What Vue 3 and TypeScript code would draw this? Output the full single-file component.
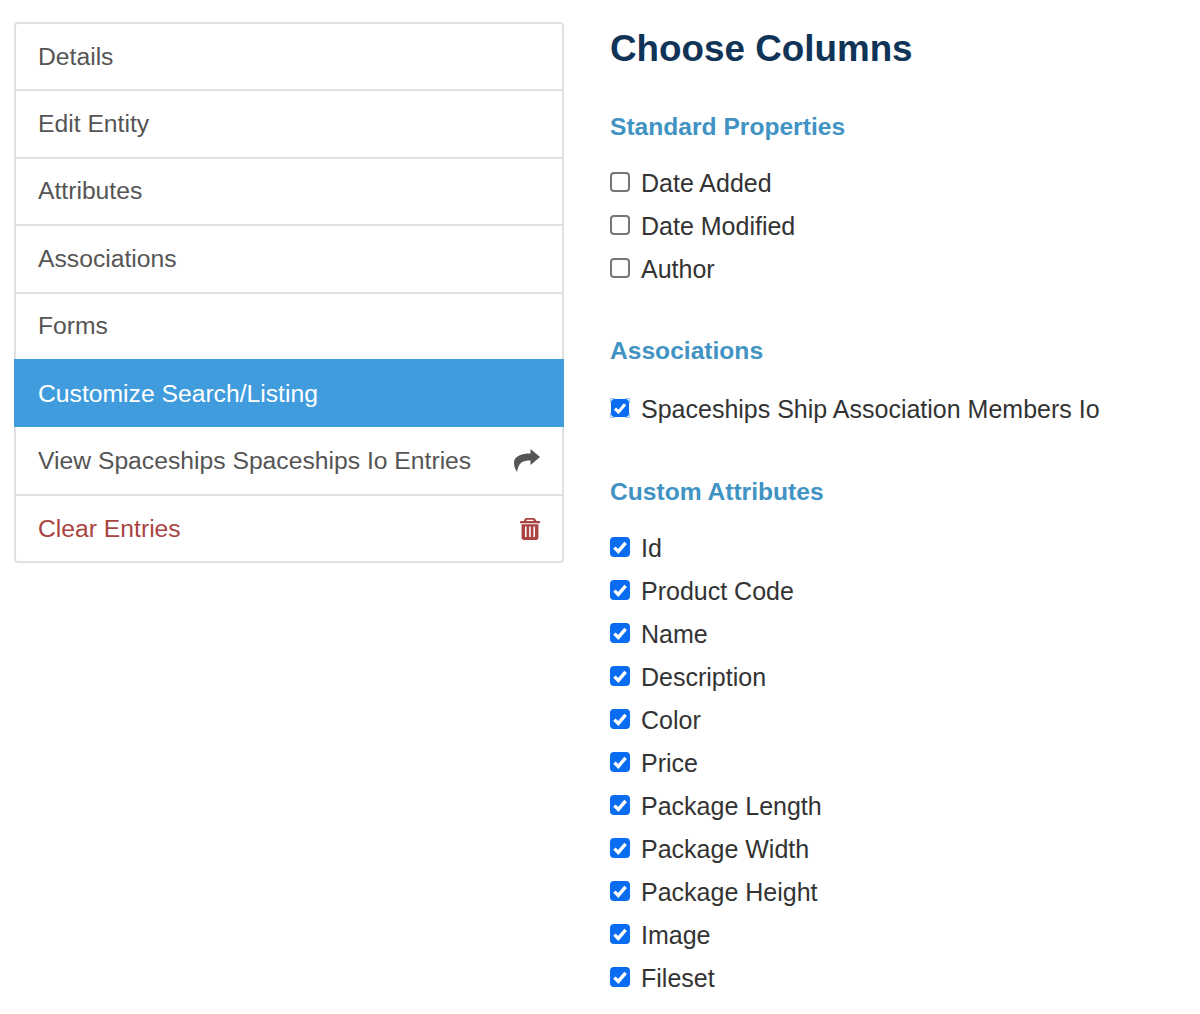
<script setup lang="ts">
interface NavItem { label: string; kind?: 'active' | 'danger'; icon?: 'share' | 'trash' }
const nav: NavItem[] = [
  { label: 'Details' },
  { label: 'Edit Entity' },
  { label: 'Attributes' },
  { label: 'Associations' },
  { label: 'Forms' },
  { label: 'Customize Search/Listing', kind: 'active' },
  { label: 'View Spaceships Spaceships Io Entries', icon: 'share' },
  { label: 'Clear Entries', kind: 'danger', icon: 'trash' },
]
interface Opt { label: string; on: boolean; focus?: boolean }
const groups: { title: string; opts: Opt[] }[] = [
  { title: 'Standard Properties', opts: ['Date Added', 'Date Modified', 'Author'].map(label => ({ label, on: false })) },
  { title: 'Associations', opts: [{ label: 'Spaceships Ship Association Members Io', on: true, focus: true }] },
  { title: 'Custom Attributes', opts: ['Id', 'Product Code', 'Name', 'Description', 'Color', 'Price', 'Package Length', 'Package Width', 'Package Height', 'Image', 'Fileset'].map(label => ({ label, on: true })) },
]
</script>

<template>
  <div class="page">
    <nav class="list">
      <a v-for="item in nav" :key="item.label" class="row" :class="item.kind">
        <span>{{ item.label }}</span>
        <svg v-if="item.icon === 'share'" class="share" viewBox="0 0 26 23" aria-hidden="true">
          <path d="M16.5 0 L26 8 L16.5 16 V11.5 C9 11.5 4.5 13 3 23 C1 20 0 17 0 14 C0 7 7 4.5 16.5 4.5 Z" />
        </svg>
        <svg v-if="item.icon === 'trash'" class="trash" viewBox="0 0 18 22" preserveAspectRatio="none" aria-hidden="true">
          <path fill-rule="evenodd" d="M6 0 H12 C13 0 13.6 .6 14 1.5 L14.7 3 H17.2 C17.7 3 18 3.3 18 3.8 V5.2 H0 V3.8 C0 3.3 .3 3 .8 3 H3.3 L4 1.5 C4.4 .6 5 0 6 0 Z M6.2 1.8 L5.6 3 H12.4 L11.8 1.8 Z M1.4 6.2 H16.6 V19.5 C16.6 21 15.7 22 14.4 22 H3.6 C2.3 22 1.4 21 1.4 19.5 Z M4.5 8.6 V19 H5.9 V8.6 Z M8.3 8.6 V19 H9.7 V8.6 Z M12.1 8.6 V19 H13.5 V8.6 Z" />
        </svg>
      </a>
    </nav>
    <main class="panel">
      <h1>Choose Columns</h1>
      <section v-for="g in groups" :key="g.title" class="group">
        <h2>{{ g.title }}</h2>
        <label v-for="o in g.opts" :key="o.label" class="opt">
          <span class="box" :class="{ on: o.on, focus: o.focus }">
            <svg v-if="o.on" viewBox="0 0 20 20" aria-hidden="true">
              <path d="M4.4 10.6 L8.3 14.4 L15.6 5.8" />
            </svg>
          </span>
          <span>{{ o.label }}</span>
        </label>
      </section>
    </main>
  </div>
</template>

<style scoped>
.page {
  display: flex;
  align-items: flex-start;
  gap: 46px;
  padding: 22px 0 0 14px;
  width: 1200px;
  height: 1014px;
  box-sizing: border-box;
  overflow: hidden;
  font-family: "Liberation Sans", Arial, sans-serif;
  background: #fff;
}
.list {
  width: 550px;
  flex: none;
  border: 2px solid #e0e0e0;
  border-radius: 4px;
  box-sizing: border-box;
}
.row {
  display: flex;
  align-items: center;
  justify-content: space-between;
  height: 67.5px;
  box-sizing: border-box;
  padding: 0 22px 0 22px;
  font-size: 24.7px;
  color: #555;
  border-top: 2px solid #e0e0e0;
}
.row:first-child { height: 65px; border-top: 0; }
.row:last-child { height: 67px; }
.row.active {
  background: #419cdd;
  color: #fff;
  border-top-color: #419cdd;
  margin: 0 -2px;
  padding-left: 24px;
  height: 68px;
}
.row.active + .row { border-top: 0; height: 67px; }
.row.danger { color: #a94442; }
.share { width: 26px; height: 23px; fill: #555; }
.trash { width: 20px; height: 22px; fill: #a94442; margin-top: 1px; }
.panel { flex: 1; color: #333; }
h1 {
  margin: 5px 0 0;
  font-size: 36.8px;
  line-height: 44px;
  font-weight: 700;
  color: #0f3458;
}
h2 {
  margin: 0 0 19px;
  font-size: 24.6px;
  line-height: 32px;
  font-weight: 700;
  color: #4193c4;
}
.group { margin-bottom: 44px; }
.group:first-of-type { margin-top: 40px; }
.group:nth-of-type(2) { margin-bottom: 45px; }
.group:nth-of-type(2) h2 { margin-bottom: 21px; }
.opt {
  display: flex;
  align-items: center;
  gap: 11px;
  height: 43px;
  font-size: 25px;
  color: #333;
}
.box {
  position: relative;
  width: 20px;
  height: 20px;
  flex: none;
  box-sizing: border-box;
  border: 2px solid #767676;
  border-radius: 4px;
  background: #fff;
  margin-top: -3px;
}
.box.on { background: #0a6cf0; border-color: #0a6cf0; }
.box svg {
  position: absolute;
  inset: -2px;
  width: 20px;
  height: 20px;
  fill: none;
  stroke: #fff;
  stroke-width: 3.4;
}
.box.focus { width: 18px; height: 18px; margin-left: 1px; margin-right: 1px; }
.box.focus svg { width: 18px; height: 18px; }
.box.focus::before {
  content: "";
  position: absolute;
  inset: -3px;
  --c: linear-gradient(#9cc4f8, #9cc4f8);
  background:
    var(--c) 0 0 / 5px 1px no-repeat, var(--c) 0 0 / 1px 5px no-repeat,
    var(--c) 100% 0 / 5px 1px no-repeat, var(--c) 100% 0 / 1px 5px no-repeat,
    var(--c) 0 100% / 5px 1px no-repeat, var(--c) 0 100% / 1px 5px no-repeat,
    var(--c) 100% 100% / 5px 1px no-repeat, var(--c) 100% 100% / 1px 5px no-repeat;
}
</style>
